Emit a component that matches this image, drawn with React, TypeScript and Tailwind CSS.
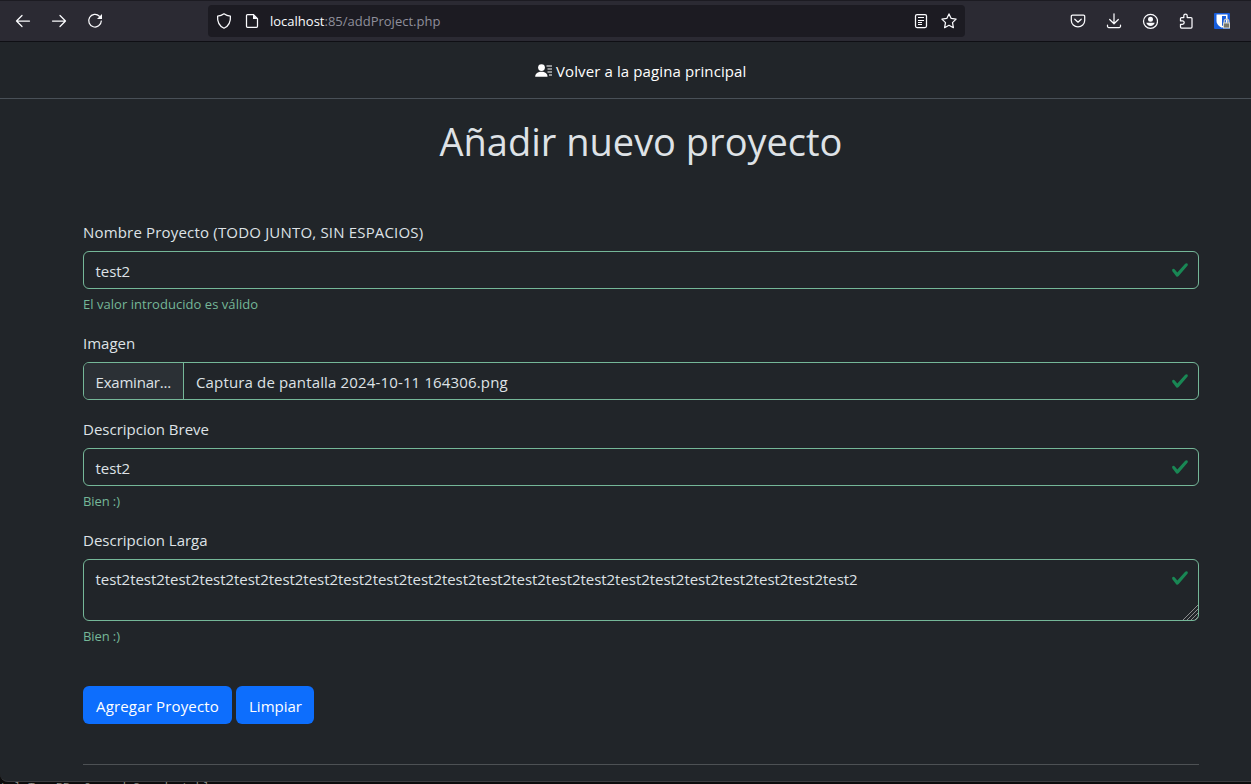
import React from "react";

const check = (
  <svg className="h-[18px] w-[18px]" viewBox="0 0 8 8" fill="#198754">
    <path d="M2.3 6.73.6 4.53c-.4-1.04.46-1.4 1.1-.8l1.1 1.4 3.4-3.8c.6-.63 1.6-.27 1.2.7l-4 4.6c-.43.5-.8.4-1.1.1z" />
  </svg>
);

function Stroke({ d, className = "h-4 w-4" }: { d: string; className?: string }) {
  return (
    <svg className={className} viewBox="0 0 16 16" fill="none" stroke="#fbfbfe" strokeWidth="1.25" strokeLinecap="round" strokeLinejoin="round">
      <path d={d} />
    </svg>
  );
}

function Label({ children, className = "" }: { children: React.ReactNode; className?: string }) {
  return (
    <label className="mb-2 flex h-6 items-center whitespace-nowrap pt-[2px] text-[15px]">
      <span className={className}>{children}</span>
    </label>
  );
}

function Feedback({ children, className = "" }: { children: React.ReactNode; className?: string }) {
  return (
    <div className="mt-1 flex h-[21px] items-center whitespace-nowrap pt-[2px] text-[13px] text-[#75b798]">
      <span className={className}>{children}</span>
    </div>
  );
}

function Field({ children }: { children: React.ReactNode }) {
  return (
    <div className="flex h-[38px] items-center justify-between overflow-hidden rounded-md border border-[#75b798] pr-[9px] text-[15px]">
      {children}
      <span className="-mt-px">{check}</span>
    </div>
  );
}

function BrowserBar() {
  return (
    <header className="flex h-[42px] items-center border-b border-t border-b-[#0f0f14] border-t-[#1c1b22] bg-[#2b2a33]">
      <div className="flex w-[208px] shrink-0 gap-5 pl-[15px]">
        <Stroke d="M1.5 8H14.5M7 2.5 1.5 8 7 13.5" />
        <Stroke d="M1.5 8H14.5M9 2.5 14.5 8 9 13.5" />
        <svg className="h-4 w-4" viewBox="0 0 16 16" fill="none" stroke="#fbfbfe" strokeWidth="1.25">
          <path d="M12.4 3.2A6.3 6.3 0 1 0 14.3 8" strokeLinecap="round" />
          <path d="M15 1v5H10z" fill="#fbfbfe" stroke="none" />
        </svg>
      </div>
      <div className="flex h-8 w-[757px] shrink-0 items-center rounded bg-[#1c1b22] pl-2 pr-2">
        <Stroke d="M8 .8C10 2.3 12.3 3 14.4 3.2 14.8 8.5 12.8 13 8 15.2 3.200 13 1.200 8.500 1.600 3.200 3.700 3 6 2.300 8 .8z" />
        <svg className="ml-3 h-4 w-4" viewBox="0 0 16 16" fill="none" stroke="#fbfbfe" strokeWidth="1.25" strokeLinejoin="round">
          <path d="M3.500 1.500H9.300L13.500 5.700V13.300a1 1 0 0 1-1 1H3.500a1 1 0 0 1-1-1V2.500a1 1 0 0 1 1-1z" />
          <path d="M9 1.500V6H13.500z" fill="#fbfbfe" stroke="none" />
        </svg>
        <span className="ml-[10px] flex-1 whitespace-nowrap pt-[2px] text-[13px] text-[#8f8f9b]">
          <span className="text-[#fbfbfe]">localhost</span>:85/addProject.php
        </span>
        <svg className="h-4 w-4" viewBox="0 0 16 16" fill="none" stroke="#fbfbfe" strokeWidth="1.25">
          <rect x="2.500" y="1.500" width="11" height="13" rx="1.500" />
          <path d="M5 4.500H11M5 7.500H11M5 9.500H9M5 11.500H9" strokeWidth="1" />
        </svg>
        <Stroke className="ml-3 h-4 w-4" d="M8 .9 10.200 5.400 15.100 6.100 11.500 9.600 12.400 14.700 8 12.300 3.600 14.700 4.500 9.600.9 6.100 5.800 5.400z" />
      </div>
      <div className="flex flex-1 items-center justify-end gap-5 pr-[21px]">
        <Stroke d="M2.500 2.200H13.500a1.200 1.200 0 0 1 1.200 1.200V7.500a6.700 6.300 0 0 1-13.400 0V3.400A1.200 1.200 0 0 1 2.500 2.200zM4.800 6.200 8 9.200 11.200 6.200" />
        <Stroke d="M8 .8V10.500M3.700 6.500 8 10.800 12.300 6.500M1.500 12.200V13.200A1.300 1.300 0 0 0 2.800 14.500H13.200A1.300 1.300 0 0 0 14.500 13.200V12.200" />
        <svg className="h-4 w-4" viewBox="0 0 16 16" fill="#fbfbfe">
          <circle cx="8.500" cy="8.300" r="7" fill="none" stroke="#fbfbfe" strokeWidth="1.250" />
          <circle cx="8.500" cy="6.200" r="2.500" />
          <path d="M4.300 9.800H12.700C12.200 11.800 10.600 12.900 8.500 12.900S4.800 11.800 4.300 9.800z" />
        </svg>
        <Stroke d="M2.500 14V11.300H4.500a1.700 1.700 0 0 0 0-3.400H2.500V5.500a1 1 0 0 1 1-1H5.800V2.700a1.700 1.700 0 0 1 3.400 0V4.500H13a1 1 0 0 1 1 1V14a1 1 0 0 1-1 1H3.500a1 1 0 0 1-1-1z" />
        <svg className="h-4 w-4" viewBox="0 0 16 16">
          <rect width="16" height="16" rx="1" fill="#175ddc" />
          <path d="M2.500 1.500H13.500V8C13.500 11.500 10.500 13.500 8 14.800 5.500 13.500 2.500 11.500 2.500 8z" fill="#fff" />
          <path d="M8 3H12V8C12 10.500 10 12 8 13z" fill="#175ddc" />
          <path d="M10.200 10V8.500a2.300 2.300 0 0 1 4.600 0V10" fill="none" stroke="#c4c4c4" strokeWidth="1.300" />
          <rect x="9" y="9.500" width="7" height="6" fill="#d6d6ce" />
          <rect x="10" y="10.500" width="5" height="4" fill="#77776e" />
        </svg>
      </div>
    </header>
  );
}

export default function App() {
  return (
    <div className="flex h-[784px] w-[1251px] flex-col overflow-hidden bg-[#0c0c0c] font-['Open_Sans','Noto_Sans',sans-serif] text-[#dee2e6]">
      <BrowserBar />
      <div className="flex h-[740px] shrink-0 flex-col rounded-bl-lg border-b border-[#3c3c40] bg-[#212529]">
        <nav className="flex h-[57px] shrink-0 items-center border-b border-[#495057] pl-[535px] pt-[2px] text-white">
          <svg className="h-4 w-[18px]" viewBox="0 0 18 16" fill="currentColor">
            <circle cx="6.500" cy="4.600" r="3.400" />
            <path d="M.2 13.800C.2 10.500 3 8.800 6.500 8.800s6 1.700 6 5z" />
            <path d="M11.500 2.500H17v1h-5.500zM12.500 5.500H17v1h-4.500zM12.500 8.500H17v1h-4.500zM14 11.500h3v1h-3z" />
          </svg>
          <a className="ml-[3px] whitespace-nowrap text-[15px] tracking-[0.11px]">Volver a la pagina principal</a>
        </nav>
        <main className="ml-[83px] flex w-[1116px] flex-1 flex-col">
          <h1 className="mt-[18px] flex h-12 items-center justify-center whitespace-nowrap text-[38px]">
            <span>Añadir nuevo proyecto</span>
          </h1>
          <form className="mt-[54px] flex flex-col">
            <Label className="tracking-[0.18px]">Nombre Proyecto (TODO JUNTO, SIN ESPACIOS)</Label>
            <Field>
              <span className="pl-[11.500px] pt-[2px] tracking-[-0.045px]">test2</span>
            </Field>
            <Feedback className="tracking-[0.04px]">El valor introducido es válido</Feedback>
            <div className="mt-4">
              <Label>Imagen</Label>
              <Field>
                <div className="flex h-full flex-1 items-center whitespace-nowrap">
                  <span className="flex h-full w-[100px] items-center border-r border-[#75b798] bg-[#2b3035] pl-[11.500px] pt-[2px] tracking-[-0.2px]">Examinar...</span>
                  <span className="pl-3 pt-[2px] tracking-[0.15px]">Captura de pantalla 2024-10-11 164306.png</span>
                </div>
              </Field>
            </div>
            <div className="mt-4">
              <Label>Descripcion Breve</Label>
              <Field>
                <span className="pl-[11.500px] pt-[2px] tracking-[-0.045px]">test2</span>
              </Field>
              <Feedback className="tracking-[-0.1px]">Bien :)</Feedback>
            </div>
            <div className="mt-4">
              <Label>Descripcion Larga</Label>
              <div className="relative flex h-[62px] items-start justify-between rounded-md border border-[#75b798] pl-[11.500px] pr-[9px]">
                <span className="mt-[7px] text-[15px] leading-6 tracking-[-0.04px]">test2test2test2test2test2test2test2test2test2test2test2test2test2test2test2test2test2test2test2test2test2test2</span>
                <span className="mt-[9px]">{check}</span>
                <svg className="absolute bottom-0 right-0 h-[15px] w-[15px]" viewBox="0 0 15 15" stroke="#a8a8a8" strokeWidth=".8">
                  <path d="M0 15 15 0M4 15 15 4M8 15 15 8M12 15 15 12" />
                </svg>
              </div>
              <Feedback className="tracking-[-0.1px]">Bien :)</Feedback>
            </div>
            <div className="mt-10 flex gap-1 text-[15px] text-white">
              <button className="flex h-[38px] w-[149px] items-center justify-center whitespace-nowrap rounded-md bg-[#0d6efd] pt-[2px] tracking-[0.16px]">Agregar Proyecto</button>
              <button className="flex h-[38px] w-[78px] items-center justify-center whitespace-nowrap rounded-md bg-[#0d6efd] pl-px pt-[2px]">Limpiar</button>
            </div>
          </form>
          <hr className="mt-10 border-t border-[#4d5154]" />
        </main>
      </div>
      <div className="h-[2px] overflow-hidden whitespace-pre font-['Liberation_Mono',monospace] text-[11.67px] leading-[14px] text-[#8c8c84]">
        <div className="-mt-[2px]">t l T   BB  O    d 3   d  t bl</div>
      </div>
    </div>
  );
}
